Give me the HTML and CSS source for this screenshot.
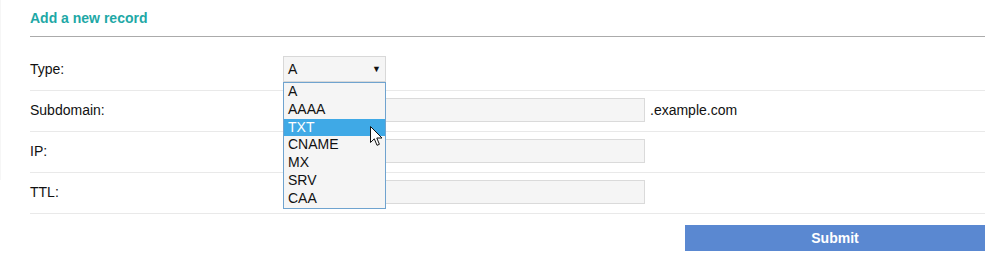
FILE: index.html
```html
<!DOCTYPE html>
<html>
<head>
<meta charset="utf-8">
<link rel="stylesheet" href="styles.css">
</head>
<body>
<div class="edge"></div>
<div class="panel">
  <h2 class="title">Add a new record</h2>
  <div class="form">
    <div class="row">
      <div class="label">Type:</div>
      <div class="field">
        <div class="select">
          <span>A</span><span class="caret">▼</span>
          <ul class="menu">
            <li>A</li>
            <li>AAAA</li>
            <li class="active">TXT</li>
            <li>CNAME</li>
            <li>MX</li>
            <li>SRV</li>
            <li>CAA</li>
          </ul>
          <svg class="cursor" width="13" height="21" viewBox="0 0 13 21"><path d="M0.5 0.5 L0.5 16.5 L4.3 12.8 L7 19.3 L9.4 18.3 L6.8 12 L12 12 Z" fill="#fff" stroke="#111" stroke-width="1" stroke-linejoin="miter"/></svg>
        </div>
      </div>
    </div>
    <div class="row">
      <div class="label">Subdomain:</div>
      <div class="field"><div class="input"></div><span class="suffix">.example.com</span></div>
    </div>
    <div class="row">
      <div class="label">IP:</div>
      <div class="field"><div class="input"></div></div>
    </div>
    <div class="row">
      <div class="label">TTL:</div>
      <div class="field"><div class="input"></div></div>
    </div>
    <div class="actions"><button class="submit">Submit</button></div>
  </div>
</div>
</body>
</html>
```
FILE: styles.css
```css
html, body { margin: 0; padding: 0; background: #fff; }
body { font-family: "Liberation Sans", Arial, sans-serif; font-size: 14px; color: #111; position: relative; }
.edge { position: absolute; left: 0; top: 0; width: 1px; height: 180px; background: #f6f6f6; }
.panel { padding: 0 15px 0 30px; width: 955px; }
.title { margin: 0; height: 36px; line-height: 36px; font-size: 14px; font-weight: bold; color: #1ea8a6; border-bottom: 1px solid #ababab; }
.form { padding-top: 11px; }
.row { display: flex; align-items: center; border-bottom: 1px solid #e9e9e9; padding: 7px 0 9px; }
.row:first-child { padding: 8px 0 8px; }
.label { width: 253px; }
.field { display: flex; align-items: center; }
.select { position: relative; box-sizing: border-box; width: 103px; height: 26px; background: #f5f5f5; border: 1px solid #d8d8d8; display: flex; align-items: center; justify-content: space-between; padding: 0 4px 0 4px; }
.caret { font-size: 9px; }
.menu { position: absolute; left: -1px; top: 25px; margin: 0; padding: 0; list-style: none; width: 103px; box-sizing: border-box; border: 1px solid #6fa3cf; background: #f5f5f5; z-index: 2; }
.menu li { height: 17.8px; line-height: 17.8px; padding-left: 4px; }
.menu li.active { background: #3fa9e6; color: #fff; }
.cursor { position: absolute; left: 86px; top: 69px; z-index: 3; }
.input { box-sizing: border-box; width: 362px; height: 24px; background: #f5f5f5; border: 1px solid #dadada; }
.suffix { margin-left: 5px; }
.actions { display: flex; justify-content: flex-end; padding-top: 11px; }
.submit { width: 300px; height: 26px; border: none; background: #5a88d1; color: #fff; font-family: "Liberation Sans", Arial, sans-serif; font-size: 14px; font-weight: bold; padding: 0; }
```
